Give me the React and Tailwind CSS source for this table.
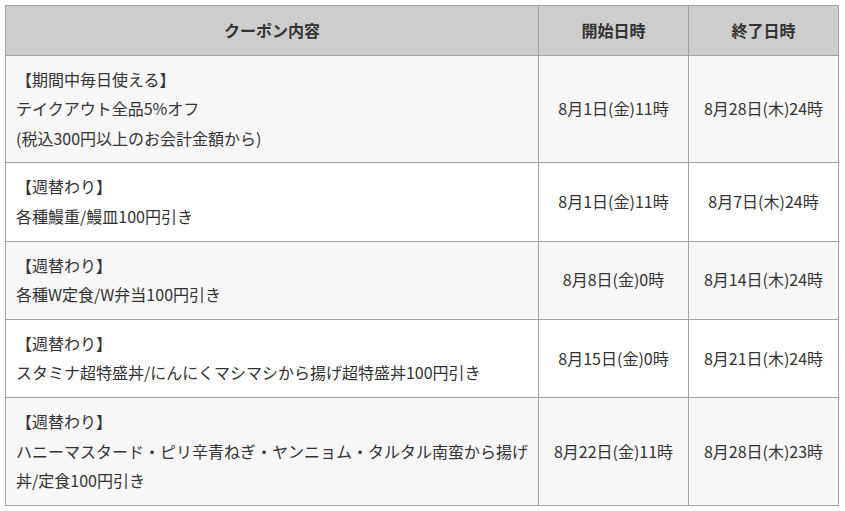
const rows = [
  {
    lines: ['【期間中毎日使える】', 'テイクアウト全品5%オフ', '(税込300円以上のお会計金額から)'],
    start: '8月1日(金)11時',
    end: '8月28日(木)24時',
  },
  {
    lines: ['【週替わり】', '各種鰻重/鰻皿100円引き'],
    start: '8月1日(金)11時',
    end: '8月7日(木)24時',
  },
  {
    lines: ['【週替わり】', '各種W定食/W弁当100円引き'],
    start: '8月8日(金)0時',
    end: '8月14日(木)24時',
  },
  {
    lines: ['【週替わり】', 'スタミナ超特盛丼/にんにくマシマシから揚げ超特盛丼100円引き'],
    start: '8月15日(金)0時',
    end: '8月21日(木)24時',
  },
  {
    lines: ['【週替わり】', 'ハニーマスタード・ピリ辛青ねぎ・ヤンニョム・タルタル南蛮から揚げ丼/定食100円引き'],
    start: '8月22日(金)11時',
    end: '8月28日(木)23時',
  },
]

export default function App() {
  return (
    <div className="bg-white p-[5px] text-[16px] leading-[29.6px] text-[#333] font-['Noto_Sans_CJK_JP','Noto_Sans',sans-serif]">
      <table className="w-[833px] table-fixed border-collapse">
        <colgroup>
          <col className="w-[533px]" />
          <col className="w-[150px]" />
          <col className="w-[150px]" />
        </colgroup>
        <thead>
          <tr className="bg-[#cdcdcd]">
            <th className="border border-[#a3a3a3] py-[9.5px] px-[10px] font-bold text-center">クーポン内容</th>
            <th className="border border-[#a3a3a3] py-[9.5px] px-[10px] font-bold text-center">開始日時</th>
            <th className="border border-[#a3a3a3] py-[9.5px] px-[10px] font-bold text-center">終了日時</th>
          </tr>
        </thead>
        <tbody>
          {rows.map((r, i) => (
            <tr key={i} className={i % 2 === 0 ? 'bg-[#f7f7f7]' : 'bg-white'}>
              <td className="border border-[#a3a3a3] py-[9px] pl-[10px] pr-[8px] align-middle">
                {r.lines.map((l, j) => (
                  <div key={j}>{l}</div>
                ))}
              </td>
              <td className="border border-[#a3a3a3] px-[4px] py-[9px] text-center align-middle">{r.start}</td>
              <td className="border border-[#a3a3a3] px-[4px] py-[9px] text-center align-middle">{r.end}</td>
            </tr>
          ))}
        </tbody>
      </table>
    </div>
  )
}
